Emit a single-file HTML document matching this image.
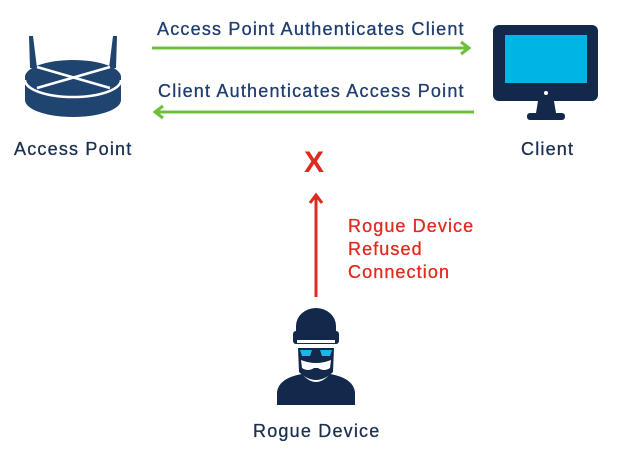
<!DOCTYPE html>
<html><head><style>
body{margin:0;width:632px;height:459px;background:#fff;overflow:hidden;position:relative;font-family:"Liberation Sans",sans-serif}
.t{position:absolute;font-size:18px;color:#1b2f50;white-space:nowrap;letter-spacing:1.2px;-webkit-text-stroke:0.3px #1b2f50}
.g{position:absolute;font-size:18px;color:#1f3d6d;white-space:nowrap;letter-spacing:1.2px;-webkit-text-stroke:0.3px #1f3d6d}
.r{position:absolute;font-size:18px;color:#e02a1f;line-height:23px;letter-spacing:1.1px;-webkit-text-stroke:0.3px #e02a1f}
</style></head><body>
<svg width="632" height="459" style="position:absolute;left:0;top:0">
<g fill="#1f4470">
<path d="M29 36 L33 36 L37 68 L30 68Z"/>
<path d="M113 36 L117 36 L116 68 L109 68Z"/>
<path d="M25 77 L25 100 A48 17 0 0 0 121 100 L121 77Z"/>
<ellipse cx="73" cy="77" rx="48" ry="17"/>
</g>
<g stroke="#fff" stroke-width="2.5" fill="none">
<path d="M25 80 A48 17 0 0 0 121 80"/>
<path d="M37 67 L110 88 M110 67 L37 88"/>
</g>
<rect x="493" y="25" width="105" height="76" rx="6" fill="#13294b"/>
<rect x="505" y="35" width="82" height="48" fill="#00b5e6"/>
<circle cx="546" cy="93" r="2" fill="#fff"/>
<path d="M538 101 L554 101 L556 113 L536 113Z" fill="#13294b"/>
<rect x="527" y="113" width="38" height="7" rx="3" fill="#13294b"/>
<g fill="#13294b">
<path d="M296 343 L296 326 A20 18 0 0 1 336 326 L336 343Z"/>
<rect x="293" y="331" width="46" height="13" rx="3"/>
<path d="M298 348 L334 348 L333 372 Q316 388 299 372Z"/>
<path d="M277 405 L277 392 Q279 378 302 374 Q316 390 330 374 Q353 378 355 392 L355 405Z"/>
</g>
<rect x="297" y="340" width="38" height="3" fill="#fff"/>
<path d="M300 350 L312 350 L310 356 L302 356Z M320 350 L332 350 L330 356 L322 356Z" fill="#19b8ea"/>
<path d="M301 360 Q316 366 331 360 L330 368 Q324 372 318 368 L314 368 Q308 372 302 368Z" fill="#fff"/>
<g stroke="#6cbf3c" stroke-width="3" fill="none">
<path d="M152 48 L468 48 M461 42 L469 48 L461 54"/>
<path d="M474 112 L156 112 M163 106 L155 112 L163 118"/>
<path d="M316 297 L316 196 M310 203 L316 195 L322 203" stroke="#e02a1f"/>
</g>
</svg>
<div class="g" style="left:157px;top:19px">Access Point Authenticates Client</div>
<div class="g" style="left:158px;top:81px">Client Authenticates Access Point</div>
<div class="t" style="left:14px;top:139px">Access Point</div>
<div class="t" style="left:521px;top:139px">Client</div>
<div class="t" style="left:253px;top:421px">Rogue Device</div>
<div style="position:absolute;left:304px;top:146px;font-size:30px;font-weight:bold;color:#e02a1f">X</div>
<div class="r" style="left:348px;top:215px">Rogue Device<br>Refused<br>Connection</div>
</body></html>
